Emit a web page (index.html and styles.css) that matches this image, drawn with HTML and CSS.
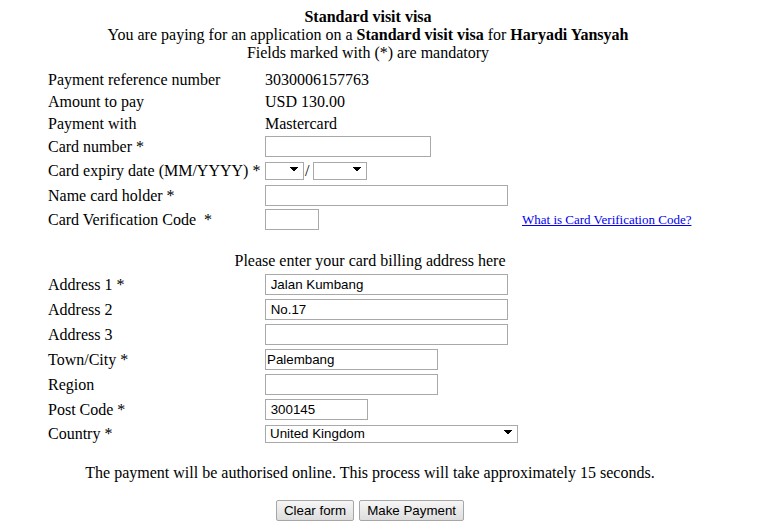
FILE: index.html
```html
<!DOCTYPE html>
<html lang="en">
<head>
<meta charset="utf-8">
<title>Payment</title>
<link rel="stylesheet" href="styles.css">
</head>
<body>
<div class="header">
  <div class="title">Standard visit visa</div>
  <div>You are paying for an application on a <b>Standard visit visa</b> for <b>Haryadi Yansyah</b></div>
  <div>Fields marked with (*) are mandatory</div>
</div>
<div class="wrap">
  <table class="pay-table">
    <colgroup>
      <col class="col-label">
      <col class="col-value">
      <col class="col-help">
    </colgroup>
    <tr class="r-info"><td>Payment reference number</td><td>3030006157763</td><td></td></tr>
    <tr class="r-info"><td>Amount to pay</td><td>USD 130.00</td><td></td></tr>
    <tr class="r-info"><td>Payment with</td><td>Mastercard</td><td></td></tr>
    <tr class="r-card"><td>Card number *</td><td><input class="field w-card" type="text"></td><td></td></tr>
    <tr class="r-expiry"><td>Card expiry date (MM/YYYY) *</td><td><div class="expiry"><select class="sel w-month"><option></option></select><span class="slash">/</span><select class="sel w-year"><option></option></select></div></td><td></td></tr>
    <tr class="r-name"><td>Name card holder *</td><td><input class="field w-long" type="text"></td><td></td></tr>
    <tr class="r-cvc"><td>Card Verification Code &nbsp;*</td><td><input class="field w-cvc" type="text"></td><td><a class="help" href="#">What is Card Verification Code?</a></td></tr>
    <tr class="r-gap"><td colspan="3"></td></tr>
    <tr class="r-section"><td colspan="3" class="section">Please enter your card billing address here</td></tr>
    <tr class="r-addr"><td>Address 1 *</td><td><input class="field w-long" type="text" value=" Jalan Kumbang"></td><td></td></tr>
    <tr class="r-addr"><td>Address 2</td><td><input class="field w-long" type="text" value=" No.17"></td><td></td></tr>
    <tr class="r-addr"><td>Address 3</td><td><input class="field w-long" type="text"></td><td></td></tr>
    <tr class="r-addr"><td>Town/City *</td><td><input class="field w-town" type="text" value="Palembang"></td><td></td></tr>
    <tr class="r-addr"><td>Region</td><td><input class="field w-town" type="text"></td><td></td></tr>
    <tr class="r-addr"><td>Post Code *</td><td><input class="field w-post" type="text" value=" 300145"></td><td></td></tr>
    <tr class="r-country"><td>Country *</td><td colspan="2"><select class="sel w-country"><option>United Kingdom</option></select></td></tr>
  </table>
  <p class="notice">The payment will be authorised online. This process will take approximately 15 seconds.</p>
  <div class="buttons">
    <button class="btn" type="button">Clear form</button>
    <button class="btn" type="button">Make Payment</button>
  </div>
</div>
</body>
</html>
```
FILE: styles.css
```css
body {
  margin: 8px;
  font-family: "Liberation Serif", "Times New Roman", serif;
  font-size: 16px;
  line-height: 18px;
  color: #000;
  background: #fff;
}

.header {
  width: 720px;
  text-align: center;
}

.title {
  font-weight: bold;
}

.wrap {
  width: 724px;
}

.pay-table {
  width: 644px;
  margin: 7px auto 0;
  border-collapse: collapse;
  table-layout: fixed;
}

.col-label { width: 217px; }
.col-value { width: 257px; }
.col-help { width: 170px; }

.pay-table td {
  padding: 0;
  vertical-align: middle;
  white-space: nowrap;
}

.r-info td { height: 22px; }
.r-card td { height: 23px; }
.r-expiry td { height: 25px; }
.r-name td { height: 25px; }
.r-cvc td { height: 23px; }
.r-gap td { height: 18px; }
.r-section td { height: 23px; }
.r-addr td { height: 25px; }
.r-country td { height: 23px; }

.section {
  text-align: center;
}

.field {
  display: block;
  box-sizing: border-box;
  height: 21px;
  margin: 0;
  padding: 1px 1px;
  border: 1px solid #a9a9a9;
  border-radius: 0;
  background: #fff;
  color: #000;
  font-family: "Liberation Sans", Arial, sans-serif;
  font-size: 13.333px;
  outline: none;
}

.w-card { width: 166px; }
.w-long { width: 243px; }
.w-cvc { width: 54px; }
.w-town { width: 173px; }
.w-post { width: 103px; }

.expiry {
  display: flex;
  align-items: center;
}

.slash {
  margin: 0 4px 0 1px;
}

.sel {
  display: block;
  box-sizing: border-box;
  height: 18px;
  margin: 0;
  padding: 0 16px 0 4px;
  border: 1px solid #a9a9a9;
  border-radius: 0;
  -webkit-appearance: none;
  appearance: none;
  background-color: #fff;
  background-image:
    linear-gradient(to bottom left, #000 50%, transparent 50%),
    linear-gradient(to bottom right, #000 50%, transparent 50%);
  background-size: 4px 5px, 4px 5px;
  background-repeat: no-repeat;
  background-position: right 9px top 4px, right 5px top 4px;
  color: #000;
  font-family: "Liberation Sans", Arial, sans-serif;
  font-size: 13.333px;
  line-height: 16px;
}

.w-month { width: 39px; }
.w-year { width: 54px; }
.w-country { width: 253px; }

.help {
  font-size: 13px;
  color: #0000ee;
  text-decoration: underline;
}

.notice {
  margin: 19px 0 18px;
  text-align: center;
}

.buttons {
  display: flex;
  justify-content: center;
  gap: 5px;
}

.btn {
  box-sizing: border-box;
  height: 21px;
  margin: 0;
  padding: 0 7px;
  border: 1px solid #a6a6a6;
  border-radius: 2px;
  background: linear-gradient(#f6f6f6, #dddddd);
  color: #000;
  font-family: "Liberation Sans", Arial, sans-serif;
  font-size: 13.333px;
}
```
